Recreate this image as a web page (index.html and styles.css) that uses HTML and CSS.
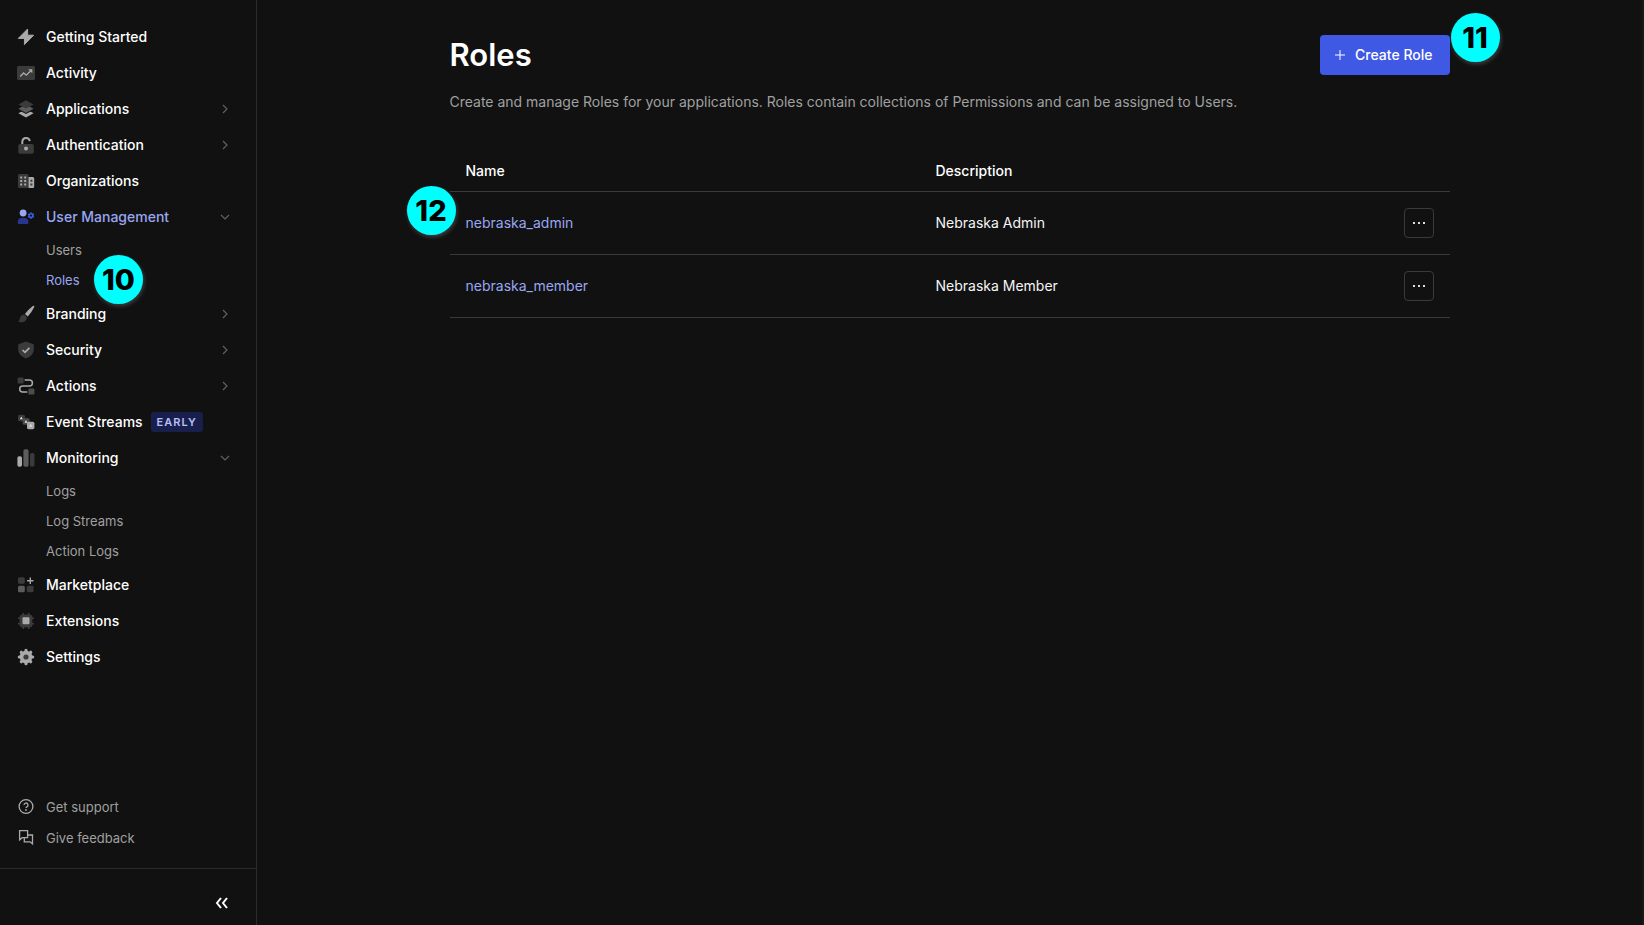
FILE: index.html
```html
<!DOCTYPE html>
<html lang="en">
<head>
<meta charset="utf-8">
<title>Roles</title>
<link rel="stylesheet" href="styles.css">
</head>
<body>
<div class="app">
  <aside class="sidebar">
    <nav class="nav" aria-label="Main">
      <a class="item" href="#"><svg class="icon" viewBox="0 0 18 18"><path class="lt lt-line" d="M10.6 1 1.3 10.4h6.2L7.4 16.6 16.6 7.2h-6z"/></svg>Getting Started</a>
      <a class="item" href="#"><svg class="icon" viewBox="0 0 18 18"><rect class="dk" y="2" width="18" height="14" rx="1.5"/><path class="line" stroke-width="1.3" d="M3.2 12.5 6.6 9l2.7 2.2L13.5 7"/><path class="lt" d="M11.2 5.2h4.1v4.1z"/></svg>Activity</a>
      <a class="item" href="#"><svg class="icon" viewBox="0 0 18 18"><path class="lt" d="m9 9 7.6 4.2L9 17.4l-7.6-4.2z"/><path class="bg" d="m9 5.7 7.6 4.2L9 14.1 1.4 9.9z"/><path class="md" d="m9 4.600 7.600 4.200L9 13 1.400 8.800z"/><path class="dk" d="m9 .2 7.600 4.200L9 8.600 1.400 4.400z"/></svg>Applications<svg class="chev" viewBox="0 0 10 10"><path d="m3 1 4 4-4 4"/></svg></a>
      <a class="item" href="#"><svg class="icon" viewBox="0 0 18 18"><path class="line" stroke-width="2" d="M5.300 8V5.500a3.800 3.800 0 0 1 7.500-.4"/><rect class="dk" x="1.300" y="8" width="15.500" height="9.700" rx="1.800"/><circle class="lt" cx="9" cy="12.600" r="2"/></svg>Authentication<svg class="chev" viewBox="0 0 10 10"><path d="m3 1 4 4-4 4"/></svg></a>
      <a class="item" href="#"><svg class="icon" viewBox="0 0 18 18"><rect class="dk" x="1" y="2" width="10.500" height="14" rx="1.500"/><path class="lt" d="M3.200 4.500h2v2h-2zm4 0h2v2h-2zm-4 3.500h2v2h-2zm4 0h2v2h-2zm-4 3.500h2v2h-2zm4 0h2v2h-2zM11.500 5h4.200q1.500 0 1.500 1.500v8q0 1.500-1.500 1.500h-4.200z"/><path class="dk" d="M13.400 7.800h2v2h-2zm0 3.600h2v2h-2z"/></svg>Organizations</a>
      <a class="item current" href="#"><svg class="icon" viewBox="0 0 18 18"><circle fill="#99a7f1" cx="6.100" cy="5" r="3.400"/><path fill="#27358c" d="M.8 13.600Q.8 10 4.500 10h3.200q3.700 0 3.700 3.600V15q0 1-1 1H1.800q-1 0-1-1z"/><circle cx="14" cy="7.600" r="1.900" fill="none" stroke="#3f59e4" stroke-width="1.500"/><path stroke="#3f59e4" stroke-width="1.300" d="m11.100 6 1.200.7M15.700 8.600l1.200.7M11.100 9.200l1.200-.7M15.700 6.700l1.200-.8M14 4.300v1.300M14 9.600v1.300"/></svg>User Management<svg class="chev" viewBox="0 0 10 10"><path d="m1 3 4 4 4-4"/></svg></a>
      <div class="sub">
        <a href="#">Users</a>
        <a class="current" href="#">Roles<span class="pin pin-nav">10</span></a>
      </div>
      <a class="item" href="#"><svg class="icon" viewBox="0 0 18 18"><path class="lt" d="M15.800.9q1-.5 1.400.2.300.4-.1 1.200-2.300 5-6.300 9.200L7.900 8.900Q11.500 4.200 15.800.9z"/><path class="dk" d="M7.100 9.600 9.900 12.300Q9.600 16.900 5 17.300q-2.300.1-4-.7 1.600-.8 1.900-3.200.4-3.400 4.200-3.800z"/></svg>Branding<svg class="chev" viewBox="0 0 10 10"><path d="m3 1 4 4-4 4"/></svg></a>
      <a class="item" href="#"><svg class="icon" viewBox="0 0 18 18"><path class="dk" d="m9 .6 7 2.500q.8.3.8 1.200V8.500q0 6-7.800 8.900-7.800-2.900-7.800-8.900V4.300q0-.9.800-1.200z"/><path class="line" stroke-width="1.700" d="m5.500 9 2.500 2.400 4.400-4.500"/></svg>Security<svg class="chev" viewBox="0 0 10 10"><path d="m3 1 4 4-4 4"/></svg></a>
      <a class="item" href="#"><svg class="icon" viewBox="0 0 18 18"><rect class="dk" x=".6" y=".6" width="6" height="6" rx="1.200"/><rect class="dk2" x="11.400" y="11.600" width="6" height="6" rx="1.200"/><path class="line" stroke-width="1.500" d="M7.600 2.900h4.800a3 3 0 0 1 0 6H5.700a3 3 0 0 0 0 6h4.600"/></svg>Actions<svg class="chev" viewBox="0 0 10 10"><path d="m3 1 4 4-4 4"/></svg></a>
      <a class="item" href="#"><svg class="icon" viewBox="0 0 18 18"><rect class="dk" x="1" y="1.800" width="7" height="6.500" rx="1.500"/><rect class="dk2" x="5.600" y="5.300" width="7" height="6.500" rx="1.500"/><rect class="lt" x="10" y="8.700" width="7.400" height="7.500" rx="1.600"/><path fill="#ddd" d="m4.300 3.500 1.500 2.700h-3zM9 7l1.500 2.700h-3zM13.700 10.800l1.600 2.900h-3.200z"/></svg>Event Streams<span class="tag">EARLY</span></a>
      <a class="item" href="#"><svg class="icon" viewBox="0 0 18 18"><rect class="lt" x=".4" y="7.200" width="4.600" height="10.500" rx="1.800"/><rect class="md" x="6.400" y=".2" width="5.200" height="17.500" rx="1.800"/><rect class="dk" x="13" y="4" width="4.500" height="13.700" rx="1.800"/></svg>Monitoring<svg class="chev" viewBox="0 0 10 10"><path d="m1 3 4 4 4-4"/></svg></a>
      <div class="sub">
        <a href="#">Logs</a>
        <a href="#">Log Streams</a>
        <a href="#">Action Logs</a>
      </div>
      <a class="item" href="#"><svg class="icon" viewBox="0 0 18 18"><rect class="dk" x="1" y="1.300" width="6.800" height="6.500" rx="1.500"/><rect class="md" x="1" y="9.800" width="6.800" height="6.500" rx="1.500"/><rect class="dk" x="9.800" y="9.800" width="6.800" height="6.500" rx="1.500"/><path class="line" stroke-width="1.400" d="M13.300 1.500v6.400M10.100 4.700h6.400"/></svg>Marketplace</a>
      <a class="item" href="#"><svg class="icon" viewBox="0 0 18 18"><path stroke="#3f3f3f" stroke-width="1.500" d="M6.300 1v16M11.700 1v16M1 6.300h16M1 11.700h16"/><rect class="dk" x="2.600" y="2.600" width="12.800" height="12.800" rx="3"/><rect class="lt" x="5.500" y="5.300" width="7" height="7" rx="1.200"/></svg>Extensions</a>
      <a class="item" href="#"><svg class="icon" viewBox="0 0 18 18"><circle class="lt" cx="9" cy="9" r="6.300"/><path stroke="#aaa" stroke-width="3.200" stroke-linecap="round" d="M9 2.300v13.400M2.300 9h13.400M4.300 4.300l9.400 9.400M13.700 4.300l-9.400 9.400"/><circle class="dk" cx="9" cy="9" r="2.600"/></svg>Settings</a>
    </nav>
    <div class="help">
      <a href="#"><svg class="icon" viewBox="0 0 18 18"><circle class="line" stroke-width="1.300" cx="9" cy="8.500" r="6.900"/><path class="line" stroke-width="1.300" d="M7 7.100a2 2 0 1 1 2.900 1.700q-.9.400-.9 1.300"/><circle class="lt" cx="9" cy="12" r=".9"/></svg>Get support</a>
      <a href="#"><svg class="icon" viewBox="0 0 18 18"><path class="line" stroke-width="1.300" d="M2.600 1.700h8v7H5.200l-2.600 2.200zM10.600 6h4.900v8.800l-2.400-2H7.300V8.700"/></svg>Give feedback</a>
    </div>
    <div class="foot">
      <button class="collapse" type="button" aria-label="Collapse menu"><svg viewBox="0 0 14 12"><path d="M6 1 2 6l4 5M12 1 8 6l4 5"/></svg></button>
    </div>
  </aside>
  <main class="main">
    <div class="page">
      <header class="head">
        <h1>Roles</h1>
        <button class="create" type="button"><svg viewBox="0 0 10 10"><path d="M5 0v10M0 5h10"/></svg>Create Role</button>
        <span class="pin pin-create">11</span>
      </header>
      <p class="intro">Create and manage Roles for your applications. Roles contain collections of Permissions and can be assigned to Users.</p>
      <div class="list">
        <span class="pin pin-list">12</span>
        <table>
          <thead><tr><th class="name">Name</th><th>Description</th><th class="act"></th></tr></thead>
          <tbody>
            <tr><td><a href="#">nebraska_admin</a></td><td>Nebraska Admin</td><td class="act"><button class="more" type="button" aria-label="More actions"><svg viewBox="0 0 12 2"><path d="M0 0h2v2H0zM5 0h2v2H5zM10 0h2v2h-2z"/></svg></button></td></tr>
            <tr><td><a href="#">nebraska_member</a></td><td>Nebraska Member</td><td class="act"><button class="more" type="button" aria-label="More actions"><svg viewBox="0 0 12 2"><path d="M0 0h2v2H0zM5 0h2v2H5zM10 0h2v2h-2z"/></svg></button></td></tr>
          </tbody>
        </table>
      </div>
    </div>
  </main>
</div>
</body>
</html>
```
FILE: styles.css
```css
* { box-sizing: border-box; }
body {
  margin: 0;
  background: #111;
  color: #f5f5f5;
  font: 14px/20px Inter, "Liberation Sans", sans-serif;
}
a { color: inherit; text-decoration: none; }
button { font: inherit; color: inherit; cursor: pointer; }
svg { display: block; flex: none; }
.app { display: flex; min-height: 100vh; }

.sidebar {
  width: 257px;
  flex: none;
  display: flex;
  flex-direction: column;
  border-right: 1px solid #2b2b2b;
}
.nav { flex: 1; padding-top: 19px; }
.item {
  display: flex;
  align-items: center;
  height: 36px;
  padding: 0 26px 0 17px;
  font-weight: 500;
  color: #fff;
}
.icon { width: 18px; height: 18px; margin-right: 11px; }
.chev {
  width: 10px;
  height: 10px;
  margin-left: auto;
  fill: none;
  stroke: #606060;
  stroke-width: 1.2;
}
.current { color: #99a7f1; }
.sub { padding-bottom: 1px; }
.sub a {
  display: flex;
  align-items: center;
  height: 30px;
  padding-left: 46px;
  font-size: 13px;
  color: #a0a0a0;
  position: relative;
}
.sub .current { color: #99a7f1; }
.tag {
  margin-left: 8px;
  padding: 0 6px;
  border-radius: 3px;
  background: #191f4d;
  color: #b5bff7;
  font-size: 11px;
  font-weight: 600;
  letter-spacing: 1px;
}
.lt { fill: #aaa; }
.lt-line { stroke: #aaa; stroke-linejoin: round; }
.md { fill: #5c5c5c; }
.dk { fill: #3b3b3b; }
.dk2 { fill: #4c4c4c; }
.bg { fill: #111; }
.line { fill: none; stroke: #aaa; }

.help { padding-bottom: 15px; }
.help a {
  display: flex;
  align-items: center;
  height: 31px;
  padding-left: 17px;
  font-size: 13px;
  color: #a0a0a0;
}
.foot {
  display: flex;
  justify-content: flex-end;
  padding: 24px 22px 12px;
  border-top: 1px solid #2b2b2b;
}
.collapse { padding: 4px 5px; border: 0; background: none; }
.collapse svg { width: 14px; height: 12px; fill: none; stroke: #fff; stroke-width: 2; }

.main { flex: 1; padding: 35px 40px 0; border-right: 2px solid #181817; }
.page { max-width: 1000px; margin: 0 auto; }
.head {
  position: relative;
  display: flex;
  align-items: center;
  justify-content: space-between;
}
h1 {
  margin: 0;
  font-size: 31px;
  line-height: 40px;
  font-weight: 600;
  color: #fff;
}
.create {
  display: flex;
  align-items: center;
  gap: 10px;
  height: 40px;
  padding: 0 17px 0 15px;
  border: 0;
  border-radius: 4px;
  background: #3f59e4;
  color: #fff;
  font-weight: 500;
}
.create svg { width: 10px; height: 10px; stroke: #fff; }
.intro { margin: 17px 0 0; color: #a0a0a0; }
.list { position: relative; margin-top: 39px; }
table { width: 100%; border-collapse: collapse; table-layout: fixed; }
th, td { padding: 0 16px; text-align: left; border-bottom: 1px solid #3a3a3a; }
th { height: 40px; font-weight: 500; color: #fff; }
td { height: 63px; }
td a { color: #99a7f1; }
.name { width: 47%; }
.act { width: 80px; }
.more {
  display: flex;
  align-items: center;
  justify-content: center;
  width: 30px;
  height: 30px;
  margin-left: auto;
  padding: 0;
  border: 1px solid #3a3a3a;
  border-radius: 4px;
  background: none;
}
.more svg { width: 12px; height: 2px; fill: #ddd; }

/* Numbered callouts that sit over the page */
.pin {
  position: absolute;
  z-index: 1;
  width: 49px;
  height: 49px;
  border-radius: 50%;
  background: #0ff;
  box-shadow: 1px 2px 4px rgba(255, 255, 255, .2);
  color: #000;
  font-size: 29px;
  line-height: 49px;
  font-weight: 800;
  text-align: center;
}
.pin-nav { left: 94px; top: -10px; }
.pin-create { left: 100%; top: -22px; margin-left: 1px; }
.pin-list { left: -43px; top: 35px; }
```
